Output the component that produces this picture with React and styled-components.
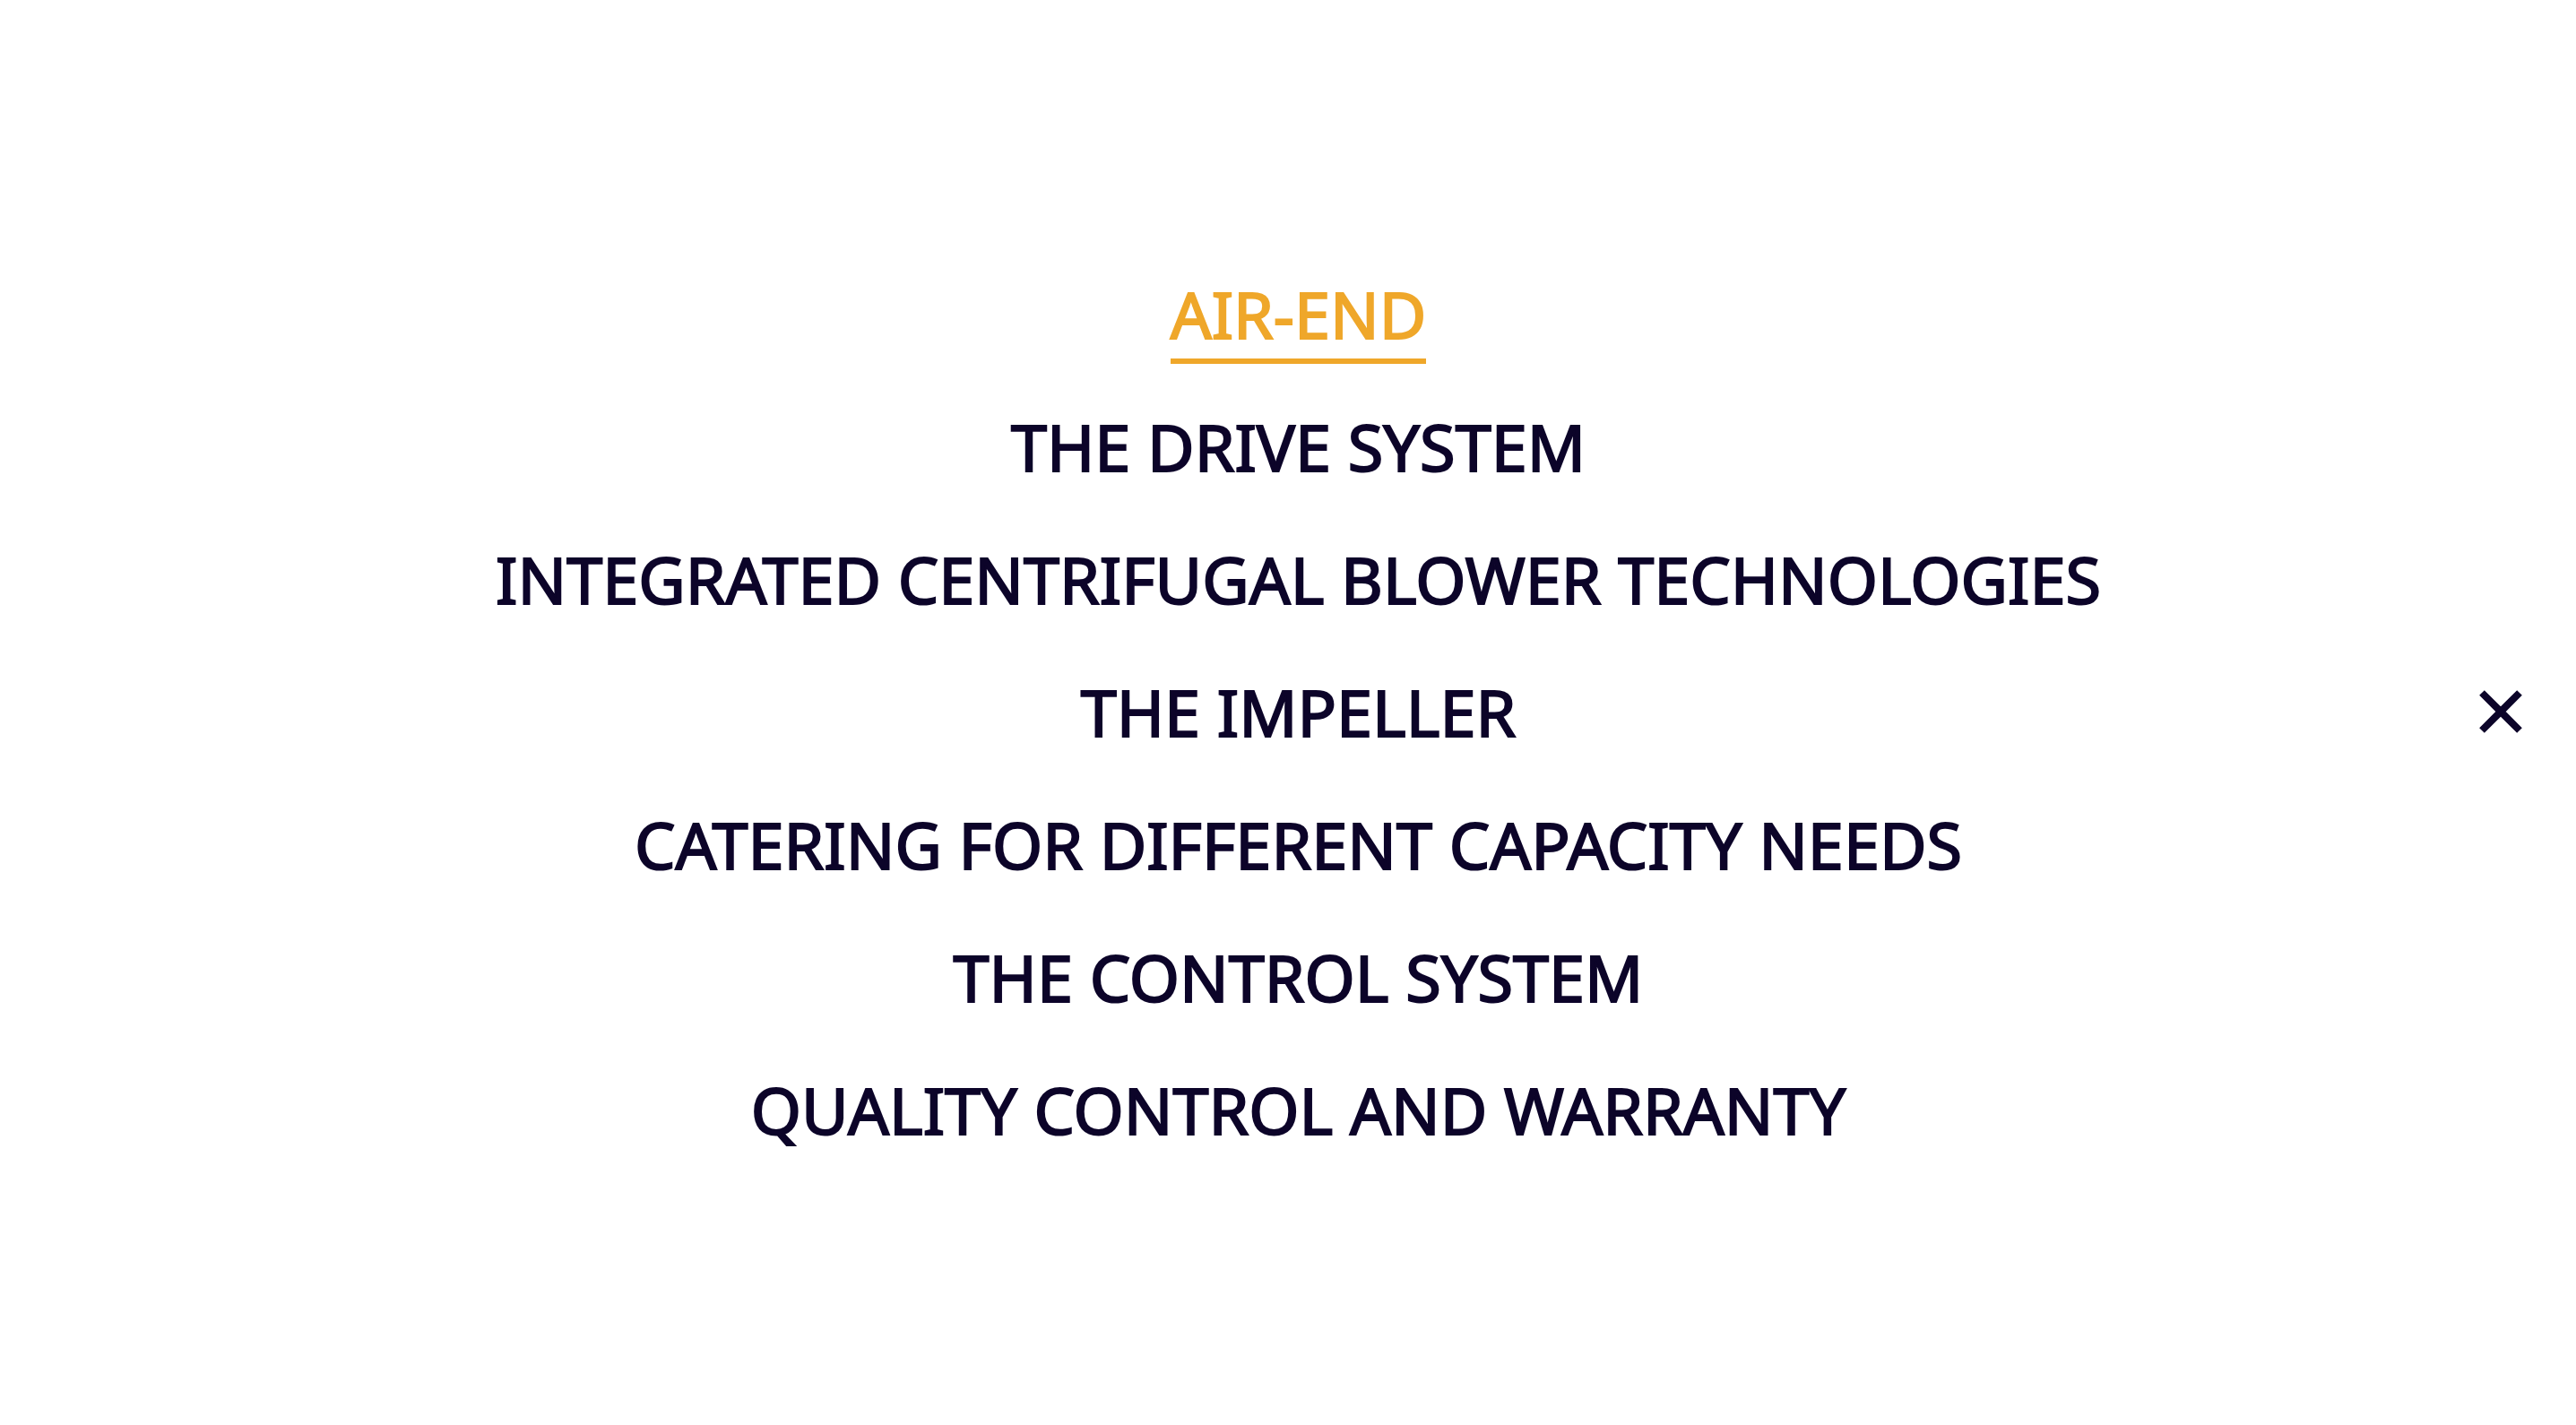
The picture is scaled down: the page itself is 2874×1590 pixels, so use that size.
import React from "react";
import styled, { createGlobalStyle } from "styled-components";

const GlobalStyle = createGlobalStyle`
  * { box-sizing: border-box; }
  body { margin: 0; background: #fff; font-family: "Noto Sans", sans-serif; }
`;

const Overlay = styled.div`
  min-height: 100vh;
  display: grid;
  grid-template-columns: 1fr auto 1fr;
  align-items: center;
  padding: 0 58px 2px;
`;

const Menu = styled.nav`
  grid-column: 2;
  padding-left: 23px;
`;

const List = styled.ul`
  list-style: none;
  margin: 0;
  padding: 0;
  display: flex;
  flex-direction: column;
  align-items: center;
  gap: 36px;
`;

const MenuLink = styled.a`
  display: block;
  padding-top: 6px;
  border-bottom: 6px solid ${(p) => (p.$active ? "#efa72a" : "transparent")};
  color: ${(p) => (p.$active ? "#efa72a" : "#0c0429")};
  font-size: 72px;
  font-weight: 400;
  line-height: 100px;
  -webkit-text-stroke: 2px currentColor;
  text-decoration: none;
  text-transform: uppercase;
  white-space: nowrap;
`;

const CloseButton = styled.button`
  justify-self: end;
  display: flex;
  padding: 0;
  border: 0;
  background: none;
  color: #0c0429;
  cursor: pointer;
`;

const items = [
  "Air-End",
  "The Drive System",
  "Integrated Centrifugal Blower Technologies",
  "The Impeller",
  "Catering for Different Capacity Needs",
  "The Control System",
  "Quality Control and Warranty",
];

export default function App() {
  return (
    <Overlay>
      <GlobalStyle />
      <Menu aria-label="Sections">
        <List>
          {items.map((item, i) => (
            <li key={item}>
              <MenuLink href="#" $active={i === 0}>{item}</MenuLink>
            </li>
          ))}
        </List>
      </Menu>
      <CloseButton type="button" aria-label="Close">
        <svg width="52" height="52" viewBox="0 0 52 52" fill="none" stroke="currentColor" strokeWidth="8">
          <path d="M5 5L47 47M47 5L5 47" />
        </svg>
      </CloseButton>
    </Overlay>
  );
}
